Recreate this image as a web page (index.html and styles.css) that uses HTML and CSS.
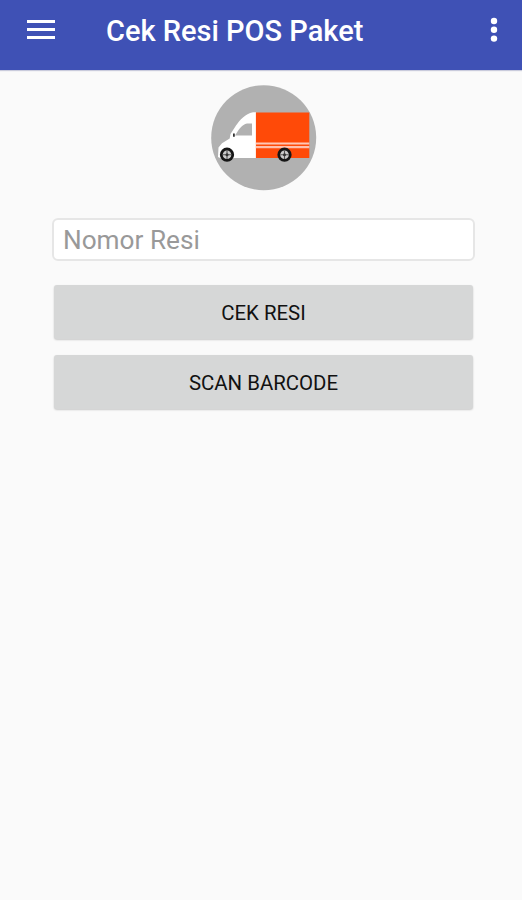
FILE: index.html
```html
<!DOCTYPE html>
<html lang="id">
<head>
    <meta charset="UTF-8">
    <title>Cek Resi POS Paket</title>
    <link rel="stylesheet" href="styles.css">
</head>
<body>
<header class="toolbar">
    <button class="icon-button" aria-label="Menu">
        <svg width="28" height="20" viewBox="0 0 28 20">
            <path d="M0 0h28v3H0zM0 8h28v3H0zM0 16h28v3H0z" fill="#fff"/>
        </svg>
    </button>
    <h1 class="title">Cek Resi POS Paket</h1>
    <button class="icon-button" aria-label="Opsi">
        <svg width="8" height="26" viewBox="0 0 8 26">
            <circle cx="4" cy="4" r="3.2" fill="#fff"/>
            <circle cx="4" cy="12.8" r="3.2" fill="#fff"/>
            <circle cx="4" cy="21.6" r="3.2" fill="#fff"/>
        </svg>
    </button>
</header>
<main class="content">
    <svg class="logo" width="106" height="106" viewBox="0 0 106 106">
        <circle cx="52.7" cy="52.7" r="52.5" fill="#b1b1b1"/>
        <!-- cab -->
        <path d="M45 27.3H42C34 29 29 35 25 40.5L19.5 49L18.7 53.5L11 58.2L7.5 62.5L7 72L9 73H45z" fill="#fff"/>
        <path d="M41 38.5H36C31 39.5 28 44 24 50.5H41z" fill="#b1b1b1"/>
        <path d="M22 48.5h1.8v3.3H22z" fill="#333"/>
        <!-- box -->
        <path d="M44.9 27.5H98.3V73H44.9z" fill="#ff4a08"/>
        <path d="M44.9 57.5H98.3V59.4H44.9z" fill="#ffc7b5"/>
        <path d="M44.9 61H98.3V63.3H44.9z" fill="#ffc0ac"/>
        <!-- wheels -->
        <g id="wheel">
            <circle cx="16" cy="69.7" r="7.1" fill="#161616"/>
            <circle cx="16" cy="69.7" r="4.3" fill="#ccc"/>
            <path d="M16 65.5v8.4M11.8 69.7h8.4" stroke="#555" stroke-width="1.1"/>
            <circle cx="16" cy="69.7" r="1.5" fill="#333"/>
        </g>
        <use href="#wheel" x="57.5"/>
    </svg>
    <form class="form">
        <input class="resi" type="text" placeholder="Nomor Resi">
        <button class="button" type="button">CEK RESI</button>
        <button class="button" type="button">SCAN BARCODE</button>
    </form>
</main>
</body>
</html>
```

FILE: styles.css
```css
* {
    box-sizing: border-box;
}

body {
    margin: 0;
    min-height: 100vh;
    background: #fafafa;
    font-family: Roboto, "Liberation Sans", sans-serif;
}

.toolbar {
    display: flex;
    align-items: center;
    height: 70px;
    padding: 0 24px 10px 27px;
    background: #3f51b5;
    box-shadow: 0 1px 1px #c9cbdc;
}

.icon-button {
    display: flex;
    padding: 0;
    border: 0;
    background: none;
}

.title {
    flex: 1;
    margin: 2px 0 0 51px;
    color: #fff;
    font-size: 29px;
    font-weight: 500;
    line-height: 32px;
    white-space: nowrap;
}

.content {
    display: flex;
    flex-direction: column;
    align-items: center;
    padding: 15px 47px 0 52px;
}

.logo {
    display: block;
}

.form {
    display: flex;
    flex-direction: column;
    width: 100%;
    margin-top: 27px;
}

.resi {
    height: 43px;
    margin-bottom: 24px;
    padding: 1px 9px 0;
    border: 2px solid #e6e6e6;
    border-radius: 6px;
    background: #fff;
    font-family: inherit;
    font-size: 26.2px;
}

.resi::placeholder {
    color: #999;
}

.button {
    height: 54px;
    margin: 0 2px 16px;
    padding: 1px 0 0;
    border: 0;
    border-radius: 3px;
    background: #d6d7d7;
    box-shadow: 0 1px 2px rgba(0, 0, 0, 0.2);
    color: #111;
    font-family: inherit;
    font-size: 20.4px;
}
```
